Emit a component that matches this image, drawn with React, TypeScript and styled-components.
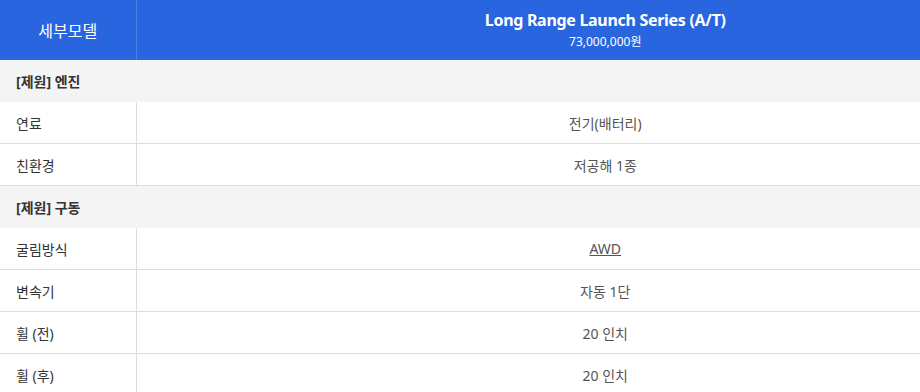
import styled, { createGlobalStyle } from 'styled-components';

const GlobalStyle = createGlobalStyle`
  html, body {
    margin: 0;
    overflow: hidden;
  }
  body {
    background: #fff;
    font-family: "Noto Sans", "Noto Sans CJK KR", sans-serif;
    color: #333;
  }
`;

type Row =
    | { kind: 'section'; title: string }
    | { kind: 'spec'; label: string; value: string; link?: boolean };

const rows: Row[] = [
    { kind: 'section', title: '[제원] 엔진' },
    { kind: 'spec', label: '연료', value: '전기(배터리)' },
    { kind: 'spec', label: '친환경', value: '저공해 1종' },
    { kind: 'section', title: '[제원] 구동' },
    { kind: 'spec', label: '굴림방식', value: 'AWD', link: true },
    { kind: 'spec', label: '변속기', value: '자동 1단' },
    { kind: 'spec', label: '휠 (전)', value: '20 인치' },
    { kind: 'spec', label: '휠 (후)', value: '20 인치' },
];

export default function App() {
    return (
        <>
            <GlobalStyle />
            <SpecTable>
                <colgroup>
                    <col style={{ width: 136 }} />
                    <col />
                </colgroup>
                <thead>
                    <tr>
                        <HeadLabel>세부모델</HeadLabel>
                        <HeadModel>
                            <ModelName>Long Range Launch Series (A/T)</ModelName>
                            <ModelPrice>73,000,000원</ModelPrice>
                        </HeadModel>
                    </tr>
                </thead>
                <tbody>
                    {rows.map((row, i) =>
                        row.kind === 'section' ? (
                            <tr key={i}>
                                <SectionCell colSpan={2}>{row.title}</SectionCell>
                            </tr>
                        ) : (
                            <tr key={i}>
                                <LabelCell>{row.label}</LabelCell>
                                <ValueCell>
                                    {row.link ? <ValueLink href="#">{row.value}</ValueLink> : row.value}
                                </ValueCell>
                            </tr>
                        )
                    )}
                </tbody>
            </SpecTable>
        </>
    );
}

// the table runs past the right edge of the window; only its left part shows
const SpecTable = styled.table`
  width: 1074px;
  border-collapse: collapse;
  table-layout: fixed;
  font-size: 14px;
`;

const HeadLabel = styled.th`
  height: 60px;
  padding: 0;
  background: #2865df;
  color: #fff;
  font-size: 16px;
  font-weight: 400;
  text-align: center;
  border-right: 1px solid #4a7fe6;
`;

const HeadModel = styled.th`
  height: 60px;
  padding: 0;
  background: #2865df;
  color: #fff;
  text-align: center;
  vertical-align: middle;
`;

const ModelName = styled.div`
  font-size: 16px;
  font-weight: 700;
  line-height: 20px;
  letter-spacing: -0.3px;
`;

const ModelPrice = styled.div`
  font-size: 12px;
  font-weight: 400;
  line-height: 16px;
  margin-top: 4px;
`;

const SectionCell = styled.td`
  height: 41px;
  padding: 0 0 0 16px;
  background: #f4f4f4;
  font-weight: 700;
  color: #333;
  border-bottom: 1px solid #f4f4f4;
`;

const LabelCell = styled.td`
  height: 41px;
  padding: 0 0 0 16px;
  border-right: 1px solid #dddddd;
  border-bottom: 1px solid #dddddd;
  color: #333;
`;

const ValueCell = styled.td`
  height: 41px;
  padding: 0;
  text-align: center;
  border-bottom: 1px solid #dddddd;
  color: #555;
`;

const ValueLink = styled.a`
  color: #555;
  text-decoration: underline;
`;
